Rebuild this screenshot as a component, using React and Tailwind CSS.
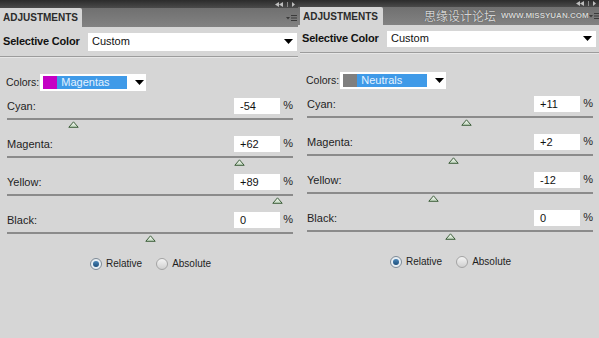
import React from "react";

const font = { fontFamily: '"Liberation Sans", Arial, sans-serif' };

const left = {
  adj: { Cyan: -54, Magenta: 62, Yellow: 89, Black: 0 },
  color: "Magentas",
  swatch: "bg-[#c400c4]",
};
const right = {
  adj: { Cyan: 11, Magenta: 2, Yellow: -12, Black: 0 },
  color: "Neutrals",
  swatch: "bg-[#7f7f7f]",
};

const fmt = (v) => (v > 0 ? `+${v}` : `${v}`);

const Arrow = () => (
  <svg width="9" height="5" viewBox="0 0 9 5">
    <path d="M0 0h9L4.5 5z" fill="#000" />
  </svg>
);

const TopBar = ({ tall }) => (
  <div
    className={`${tall ? "h-[8px]" : "h-[7px]"} bg-gradient-to-b from-[#2c2c2c] to-[#4a4a4a] flex items-center justify-end pr-[3px] gap-[4px]`}
  >
    <svg width="8" height="5" viewBox="0 0 8 5">
      <path d="M4 0v5L0 2.5zM8 0v5L4 2.5z" fill="#bdbdbd" />
    </svg>
    <div className="w-px h-[5px] bg-[#8a8a8a]" />
    <svg width="3" height="5" viewBox="0 0 3 5">
      <path d="M0 0l3 2.5L0 5z" fill="#bdbdbd" />
    </svg>
  </div>
);

const MenuIcon = () => (
  <svg width="11" height="8" viewBox="0 0 11 8">
    <path d="M0 3h4L2 5.5z" fill="#3a3a3a" />
    <rect x="5" y="1" width="6" height="1" fill="#3a3a3a" />
    <rect x="5" y="3.5" width="6" height="1" fill="#3a3a3a" />
    <rect x="5" y="6" width="6" height="1" fill="#3a3a3a" />
  </svg>
);

const TabBar = ({ tall, watermark }) => (
  <div
    className={`${tall ? "h-[19px]" : "h-[18px]"} bg-gradient-to-b from-[#707070] to-[#828282] flex items-stretch whitespace-nowrap`}
  >
    <div
      className={`${watermark ? "ml-[2px] w-[83px]" : "w-[82px]"} shrink-0 bg-[#d6d6d6] rounded-tr-[2px] flex items-center pl-[3px] text-[10px] font-bold text-[#2b2b2b]`}
    >
      ADJUSTMENTS
    </div>
    {watermark && (
      <div className="flex items-center ml-[41px] gap-[5px] text-[#d4d4d4] [text-shadow:0_0_1px_#3c3c3c]">
        <span
          className="text-[12px] leading-none"
          style={{ fontFamily: '"Noto Sans CJK SC", sans-serif' }}
        >
          思缘设计论坛
        </span>
        <span className="text-[8px] leading-none font-bold">WWW.MISSYUAN.COM</span>
      </div>
    )}
    <div className="ml-auto flex items-center pr-[1px]">
      <MenuIcon />
    </div>
  </div>
);

const Slider = ({ label, value, padL, padR }) => {
  const pct = ((value + 100) / 200) * 100;
  return (
    <div className="h-[38px]" style={{ paddingLeft: padL, paddingRight: padR }}>
      <div className="h-[16px] flex items-center">
        <span className="text-[11px] text-[#1e1e1e]">{label}:</span>
        <div className="ml-auto w-[46px] h-[16px] bg-white flex items-center pl-[6px] text-[11px] text-[#111]">
          {fmt(value)}
        </div>
        <span className="w-[13px] text-right text-[11px] text-[#1e1e1e] -mt-[2px]">%</span>
      </div>
      <div className="mt-[4px] h-[2px] bg-[#8b8b8b]" />
      <div className="relative h-[16px]">
        <svg
          className="absolute top-[1px]"
          style={{ left: `calc(${pct}% - 5px)` }}
          width="11"
          height="7"
          viewBox="0 0 11 7"
        >
          <defs>
            <linearGradient id="tri" x1="0" y1="0" x2="0" y2="1">
              <stop offset="0" stopColor="#ffffff" />
              <stop offset="1" stopColor="#bcd3b8" />
            </linearGradient>
          </defs>
          <path d="M5.5 0.8L10.2 6.3H0.8z" fill="url(#tri)" stroke="#3f5f3c" strokeWidth="1" />
        </svg>
      </div>
    </div>
  );
};

const Radio = ({ on, label }) => (
  <div className="flex items-center gap-[4px]">
    <div
      className={`w-[12px] h-[12px] rounded-full border flex items-center justify-center ${
        on ? "border-[#7d8a96] bg-[#e8eef3]" : "border-[#a4a4a4] bg-gradient-to-b from-[#f4f4f4] to-[#d0d0d0]"
      }`}
    >
      {on && <div className="w-[6px] h-[6px] rounded-full bg-gradient-to-b from-[#4a86b8] to-[#1d4f7c]" />}
    </div>
    <span className="text-[10px] text-[#1e1e1e]">{label}</span>
  </div>
);

const Panel = ({ data, isRight }) => {
  const padL = isRight ? "9px" : "7px";
  const padR = isRight ? "6px" : "5px";
  return (
    <div className={`${isRight ? "flex-1 min-w-0" : "w-[298px]"} h-[338px] bg-[#d6d6d6] flex flex-col`}>
      <TopBar tall={!isRight} />
      <TabBar tall={!isRight} watermark={isRight} />
      <div
        className={`${isRight ? "h-[27px] pl-[4px] pr-[3px]" : "h-[29px] pl-[3px] pr-[1px]"} flex items-center whitespace-nowrap`}
      >
        <span className="text-[11px] font-bold text-[#111] tracking-[-0.2px]">Selective Color</span>
        <div
          className={`ml-auto w-[209px] ${isRight ? "h-[16px]" : "h-[18px]"} bg-white flex items-center pl-[4px] pr-[4px] text-[11px] text-[#111]`}
        >
          Custom
          <div className="ml-auto">
            <Arrow />
          </div>
        </div>
      </div>
      <div className={`h-px bg-[#9c9c9c] ${isRight ? "ml-[2px]" : ""}`} />
      <div className={`h-px bg-[#e6e6e6] ${isRight ? "ml-[2px]" : ""}`} />
      <div
        className={`${isRight ? "mt-[18px] pl-[8px]" : "mt-[16px] pl-[6px]"} h-[17px] flex items-center`}
      >
        <span className="text-[10.5px] text-[#1e1e1e]">Colors:</span>
        <div className="ml-px w-[106px] h-[17px] bg-white flex items-center pl-[3px]">
          <div className={`w-[14px] h-[13px] ${data.swatch}`} />
          <div className="w-[70px] h-[13px] bg-[#3f9ae8] flex items-center pl-[4px] text-[11px] text-[#e4f2ff]">
            {data.color}
          </div>
          <div className="ml-[8px]">
            <Arrow />
          </div>
        </div>
      </div>
      <div className="mt-[7px]">
        {Object.entries(data.adj).map(([k, v]) => (
          <Slider key={k} label={k} value={v} padL={padL} padR={padR} />
        ))}
      </div>
      <div className={`mt-[6px] flex items-center gap-[14px] ${isRight ? "pl-[92px]" : "pl-[90px]"}`}>
        <Radio on label="Relative" />
        <Radio label="Absolute" />
      </div>
    </div>
  );
};

export default function App() {
  return (
    <div className="w-[599px] h-[338px] overflow-hidden flex bg-[#d6d6d6]" style={font}>
      <Panel data={left} />
      <Panel data={right} isRight />
    </div>
  );
}
